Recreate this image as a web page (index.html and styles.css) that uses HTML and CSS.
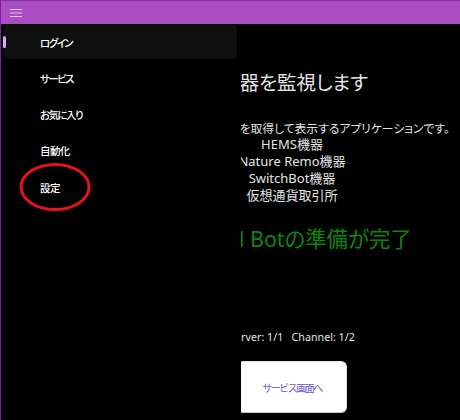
FILE: index.html
```html
<!DOCTYPE html>
<html lang="ja">
<head>
<meta charset="utf-8">
<title>Monitor</title>
<link rel="stylesheet" href="styles.css">
</head>
<body>
<div class="window">
  <header class="titlebar">
    <button class="menu-btn" aria-label="menu">
      <svg width="12" height="8" viewBox="0 0 12 8"><path d="M0 0.5H12M0 4H12M0 7.5H12" stroke="#e4c6ec" stroke-width="1" fill="none"/></svg>
    </button>
  </header>
  <div class="body">
    <main class="main">
      <h1 class="heading">機器を監視します</h1>
      <p class="lead">家の各種機器の情報を取得して表示するアプリケーションです。</p>
      <ul class="list">
        <li>HEMS機器</li>
        <li>Nature Remo機器</li>
        <li>SwitchBot機器</li>
        <li>仮想通貨取引所</li>
      </ul>
      <p class="status">Discord Botの準備が完了</p>
      <p class="counts">Server: 1/1&nbsp;&nbsp; Channel: 1/2</p>
      <button class="service-btn">サービス画面へ</button>
    </main>
    <nav class="pane">
      <a class="nav-item kana selected"><span class="indicator"></span>ログイン</a>
      <a class="nav-item kana">サービス</a>
      <a class="nav-item kana">お気に入り</a>
      <a class="nav-item">自動化</a>
      <a class="nav-item">設定</a>
    </nav>
  </div>
  <svg class="annotation" width="74" height="50" viewBox="0 0 74 50"><ellipse cx="37" cy="25" rx="34" ry="22.5" fill="none" stroke="#e3121b" stroke-width="3"/></svg>
</div>
</body>
</html>
```
FILE: styles.css
```css
* { box-sizing: border-box; }
html, body { margin: 0; padding: 0; }
body {
  width: 460px;
  height: 420px;
  overflow: hidden;
  background: #000;
  font-family: "Noto Sans", "Noto Sans CJK JP", sans-serif;
  font-feature-settings: "palt";
}
.window {
  position: relative;
  width: 460px;
  height: 420px;
  border-left: 1px solid #7a1fa0;
  display: flex;
  flex-direction: column;
  overflow: hidden;
}
.titlebar {
  height: 24px;
  flex: none;
  background: #aa4dc1;
  border-top: 1px solid #8a2fa6;
  display: flex;
  align-items: flex-start;
}
.menu-btn {
  border: 0;
  background: transparent;
  padding: 0;
  margin: 8px 0 0 9px;
  width: 12px;
  height: 8px;
  display: block;
}
.menu-btn svg { display: block; }
.body {
  position: relative;
  flex: 1;
  background: #000;
}
.main {
  display: flex;
  flex-direction: column;
  align-items: center;
  padding: 47px 0 0 123px;
  color: #e4e4e4;
}
.main > * { white-space: nowrap; margin: 0; }
.heading {
  font-size: 19.5px;
  font-weight: 400;
  line-height: 24px;
  padding-left: 4px;
}
.lead {
  font-size: 11.8px;
  line-height: 16px;
  margin-top: 25px;
}
.list {
  list-style: none;
  padding: 0;
  display: flex;
  flex-direction: column;
  align-items: center;
  font-size: 13px;
  line-height: 17px;
}
.status {
  color: #0a880a;
  font-size: 21.4px;
  line-height: 28px;
  margin-top: 21px;
  padding-right: 4px;
}
.counts {
  font-size: 10.7px;
  line-height: 16px;
  margin-top: 76px;
}
.service-btn {
  margin-top: 16px;
  width: 110px;
  height: 52px;
  background: #fff;
  border: 1px solid #e2e2e2;
  border-bottom-color: #c8c8c8;
  border-radius: 6px;
  color: #6a5acd;
  font-family: inherit;
  font-size: 10px;
  letter-spacing: -1.5px;
  padding: 0;
}
.pane {
  position: absolute;
  left: 0;
  top: 0;
  bottom: 0;
  width: 240px;
  background: #000;
  padding: 1px 4px 0 3px;
  display: flex;
  flex-direction: column;
  gap: 2.25px;
}
.nav-item {
  position: relative;
  height: 34px;
  display: flex;
  align-items: center;
  padding-left: 36px;
  border-radius: 4px;
  color: #fff;
  font-size: 10.5px;
  font-weight: 500;
  letter-spacing: -0.6px;
}
.nav-item.kana { letter-spacing: -1.6px; }
.nav-item.selected { background: #0f0f0f; }
.indicator {
  position: absolute;
  left: -1px;
  top: 11px;
  width: 3px;
  height: 12px;
  border-radius: 2px;
  background: #e3a6ec;
}
.annotation {
  position: absolute;
  left: 17px;
  top: 162px;
}
```
